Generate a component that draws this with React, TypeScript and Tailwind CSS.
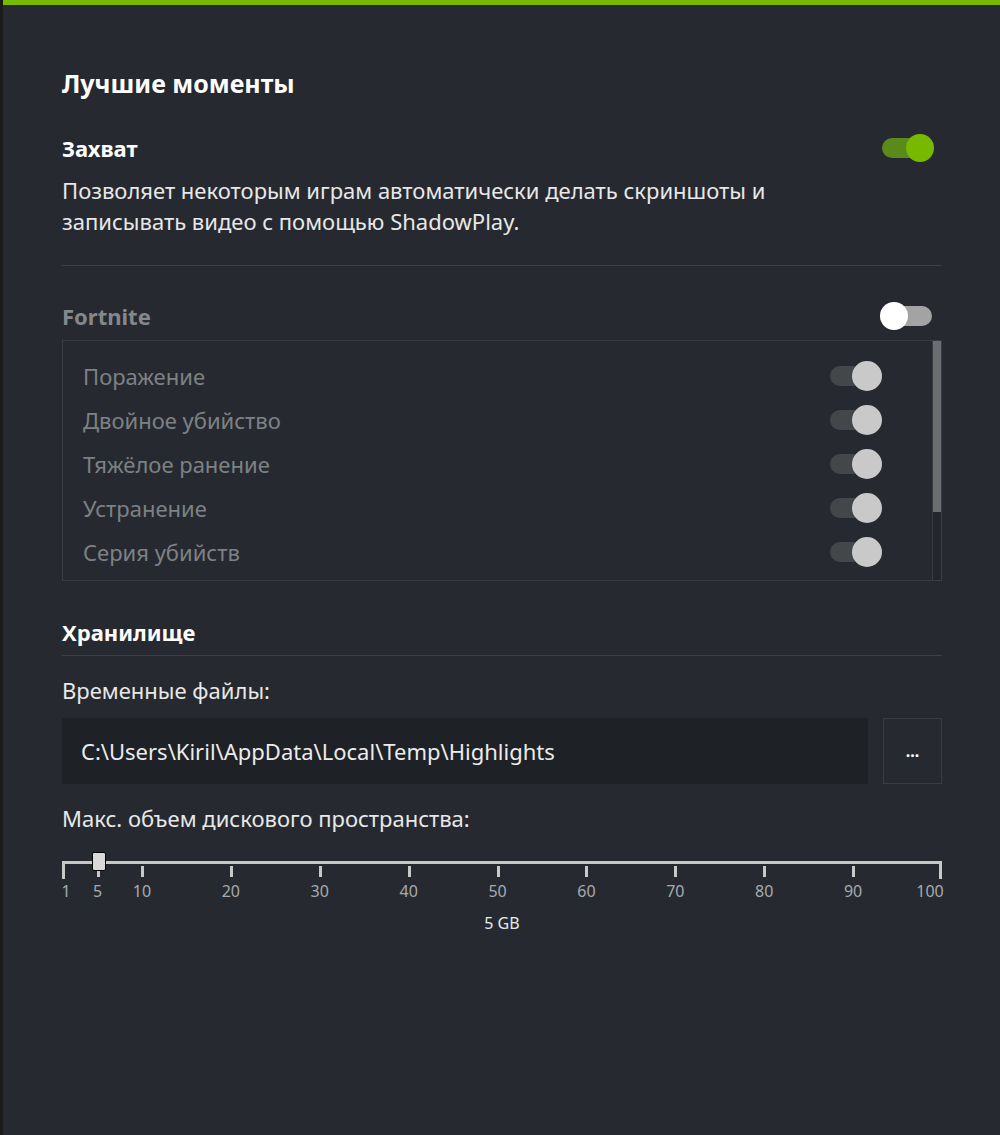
import React from 'react'

const events = ['Поражение', 'Двойное убийство', 'Тяжёлое ранение', 'Устранение', 'Серия убийств']
const ticks = [1, 5, 10, 20, 30, 40, 50, 60, 70, 80, 90, 100]

// x position on the 880px scale
const pos = (v: number) => ((v - 1) / 99) * 880

const Toggle = ({ on, dim }: { on: boolean; dim?: boolean }) => {
  if (dim) {
    return (
      <div className="relative h-[26px] w-[52px]">
        <div className="absolute left-0 top-[3px] h-[20px] w-[44px] rounded-full bg-[#44474a]" />
        <div className="absolute right-0 top-[-2px] h-[30px] w-[30px] rounded-full bg-[#c9c9c9]" />
      </div>
    )
  }
  return on ? (
    <div className="relative h-[28px] w-[52px]">
      <div className="absolute left-0 top-[4px] h-[20px] w-[44px] rounded-full bg-[#5a8a1a]" />
      <div className="absolute right-0 top-0 h-[28px] w-[28px] rounded-full bg-[#76b900]" />
    </div>
  ) : (
    <div className="relative h-[28px] w-[52px]">
      <div className="absolute right-0 top-[4px] h-[20px] w-[40px] rounded-full bg-[#a3a3a3]" />
      <div className="absolute left-0 top-0 h-[28px] w-[28px] rounded-full bg-white" />
    </div>
  )
}

export default function App() {
  return (
    <div
      className="flex min-h-[1135px] w-[1000px] bg-[#1b1b1b] text-white"
      style={{ fontFamily: '"Noto Sans", "Open Sans", sans-serif' }}
    >
      <div className="ml-[3px] flex-1 bg-[#262a30]">
        <div className="h-[5px] bg-[#76b900]" />

        <div className="pl-[59px] pr-[58px] pt-[62px]">
          <h1 className="text-[25px] font-bold leading-[32px]">Лучшие моменты</h1>

          {/* Захват */}
          <div className="mt-[33px] flex items-center justify-between">
            <span className="text-[22px] font-bold leading-[32px]">Захват</span>
            <div className="mr-[8px]">
              <Toggle on />
            </div>
          </div>
          <p className="mt-[11px] text-[22px] leading-[31px] text-[#e8e8e8]">
            Позволяет некоторым играм автоматически делать скриншоты и
            <br />
            записывать видео с помощью ShadowPlay.
          </p>
          <div className="mt-[28px] h-px bg-[#3d4146]" />

          {/* Fortnite */}
          <div className="mt-[35px] flex items-center justify-between">
            <span className="text-[22px] font-bold leading-[30px] text-[#85888b]">Fortnite</span>
            <div className="mr-[10px]">
              <Toggle on={false} />
            </div>
          </div>
          <div className="mt-[9px] flex h-[241px] border border-[#393d41]">
            <div className="flex flex-1 flex-col pl-[20px] pr-[50px] pt-[13px]">
              {events.map((e) => (
                <div key={e} className="flex h-[44px] items-center justify-between">
                  <span className="text-[22px] text-[#7e8184]">{e}</span>
                  <Toggle on dim />
                </div>
              ))}
            </div>
            <div className="flex w-[9px] flex-col border-l border-[#393d41]">
              <div className="h-[171px] bg-[#6b6e71]" />
              <div className="flex-1 bg-[#23262b]" />
            </div>
          </div>

          {/* Хранилище */}
          <h2 className="mt-[36px] text-[22px] font-bold leading-[30px]">Хранилище</h2>
          <div className="mt-[8px] h-px bg-[#3d4146]" />
          <div className="mt-[19px] text-[22px] leading-[30px] text-[#e8e8e8]">Временные файлы:</div>
          <div className="mt-[13px] flex gap-[15px]">
            <div className="flex h-[66px] flex-1 items-center bg-[#1e2125] pl-[19px] text-[22px] text-[#ececec]">
              C:\Users\Kiril\AppData\Local\Temp\Highlights
            </div>
            <div className="flex h-[66px] w-[59px] items-center justify-center border border-[#393d41] text-[16px] font-bold">
              ...
            </div>
          </div>
          <div className="mt-[19px] text-[22px] leading-[30px] text-[#e8e8e8]">
            Макс. объем дискового пространства:
          </div>

          {/* slider */}
          <div className="relative mt-[14px] h-[110px] w-[880px]">
            <div className="absolute left-0 top-[14px] h-[3px] w-full bg-[#c8c8c8]" />
            <div className="absolute left-0 top-[14px] h-[18px] w-[3px] bg-[#c8c8c8]" />
            <div className="absolute right-0 top-[14px] h-[18px] w-[3px] bg-[#c8c8c8]" />
            {ticks.slice(1, -1).map((t) => (
              <div
                key={t}
                className="absolute top-[19px] h-[11px] w-[3px] bg-[#c8c8c8]"
                style={{ left: pos(t) - 1 }}
              />
            ))}
            {ticks.map((t) => (
              <span
                key={t}
                className="absolute top-[34px] w-[40px] text-center text-[16px] leading-[20px] text-[#a7aaad]"
                style={{ left: pos(t) - 20 + (t === 1 ? 4 : t === 100 ? -12 : 0) }}
              >
                {t}
              </span>
            ))}
            <div
              className="absolute top-[5px] h-[19px] w-[14px] rounded-[2px] border border-black bg-[#d9d9d9]"
              style={{ left: pos(5) - 6 }}
            />
            <div className="absolute left-[410px] top-[66px] w-[60px] text-center text-[16px] leading-[20px] text-[#e8e8e8]">
              5 GB
            </div>
          </div>
        </div>
      </div>
    </div>
  )
}
